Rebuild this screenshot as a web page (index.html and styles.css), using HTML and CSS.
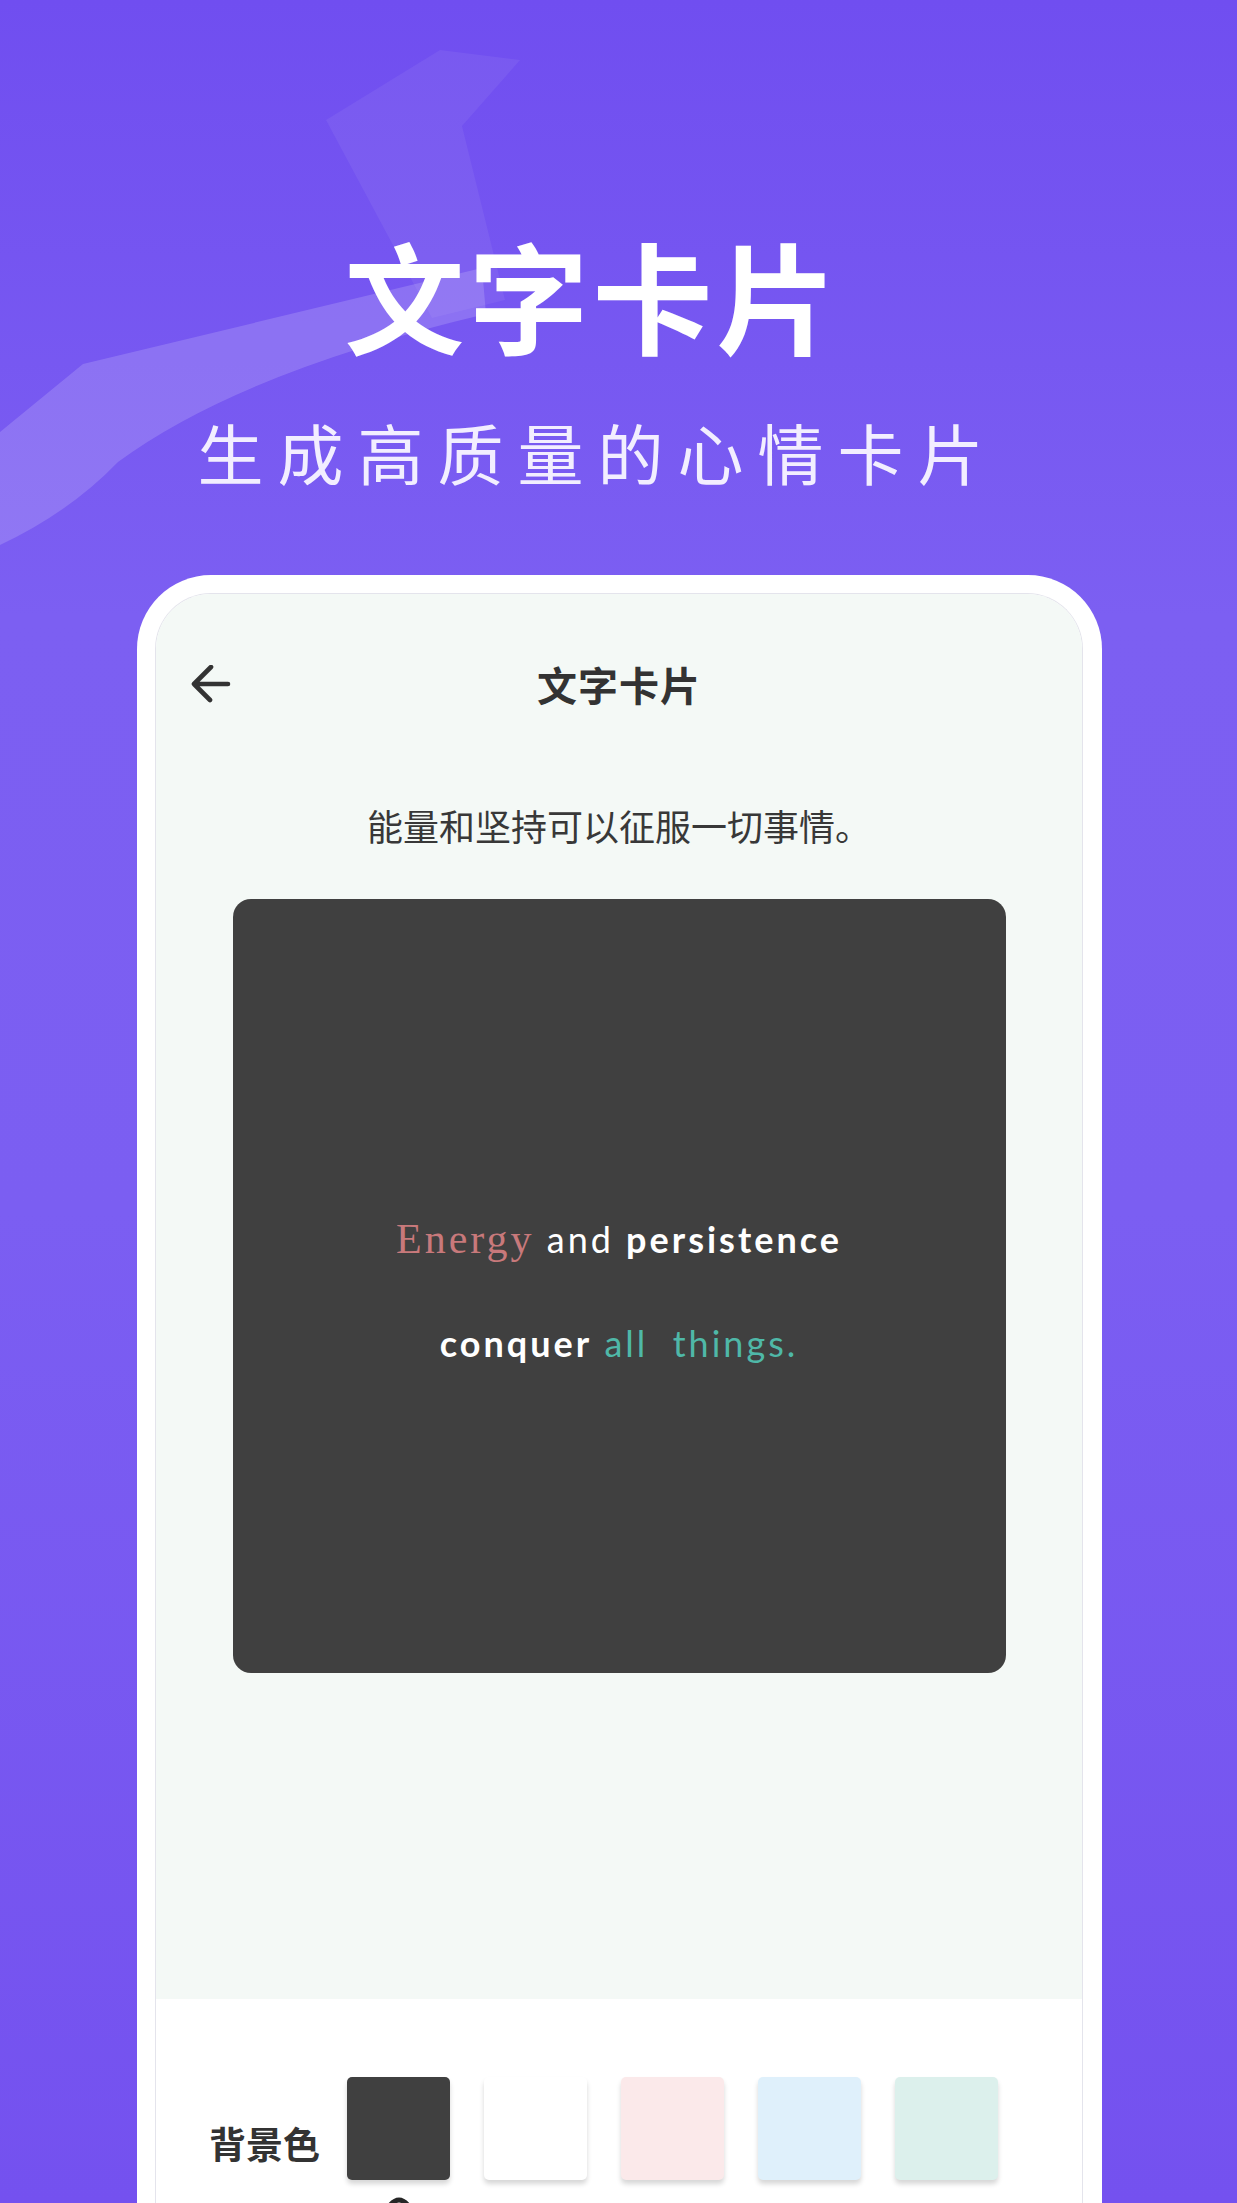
FILE: index.html
```html
<!DOCTYPE html>
<html lang="zh-CN">
<head>
<meta charset="utf-8">
<title>文字卡片</title>
<link rel="stylesheet" href="styles.css">
</head>
<body>
<svg class="deco" width="1237" height="700" viewBox="0 0 1237 700" aria-hidden="true">
  <path class="deco-a" d="M440 50 L326 120 L432 318 L505 300 L462 126 L520 60 Z"/>
  <path class="deco-b" d="M482 268 L83 364 L0 432 L0 545 Q70 512 118 462 Q240 372 486 314 Z"/>
</svg>
<header class="hero">
  <h1 class="hero-title">文字卡片</h1>
  <p class="hero-sub">生成高质量的心情卡片</p>
</header>
<div class="phone">
  <div class="screen">
    <div class="preview">
      <div class="nav">
        <svg class="back" width="40" height="38" viewBox="0 0 40 38" aria-hidden="true">
          <path d="M37 19 H3 M20 2 L3 19 L19 35"/>
        </svg>
        <div class="nav-title">文字卡片</div>
        <div></div>
      </div>
      <p class="quote">能量和坚持可以征服一切事情。</p>
      <div class="card">
        <div class="card-text">
          <div class="line"><span class="w-serif">Energy</span> <span class="w-sans">and</span> <span class="w-bold">persistence</span></div>
          <div class="line"><span class="w-bold">conquer</span> <span class="w-teal">all&nbsp; things.</span></div>
        </div>
      </div>
    </div>
    <div class="tools">
      <div class="row">
        <span class="label">背景色</span>
        <div class="swatches">
          <div class="sw-col">
            <div class="swatch sw-dark"></div>
            <svg class="pick" width="30" height="20" viewBox="0 0 30 20" aria-hidden="true">
              <path d="M4 18 Q15 2 26 18"/>
            </svg>
          </div>
          <div class="sw-col"><div class="swatch sw-white"></div></div>
          <div class="sw-col"><div class="swatch sw-pink"></div></div>
          <div class="sw-col"><div class="swatch sw-blue"></div></div>
          <div class="sw-col"><div class="swatch sw-mint"></div></div>
        </div>
      </div>
    </div>
  </div>
</div>
</body>
</html>
```
FILE: styles.css
```css
html, body {
  margin: 0;
  padding: 0;
}
body {
  width: 1237px;
  height: 2203px;
  overflow: hidden;
  position: relative;
  font-family: "Noto Sans CJK SC", "Noto Sans", sans-serif;
  background: linear-gradient(180deg, #704ef0 0%, #7c5ff2 28%, #7b5ef2 55%, #7451ef 100%);
}
.deco {
  position: absolute;
  left: 0;
  top: 0;
  z-index: 0;
}
.deco-a { fill: rgba(255,255,255,0.06); }
.deco-b { fill: rgba(255,255,255,0.16); }

.hero {
  position: relative;
  z-index: 1;
  padding: 222px 56px 0 0;
  text-align: center;
  color: #fff;
}
.hero-title {
  margin: 0;
  font-size: 120px;
  line-height: 144px;
  font-weight: 700;
  letter-spacing: 4px;
  padding-left: 4px;
}
.hero-sub {
  margin: 45px 0 0;
  font-size: 66px;
  line-height: 80px;
  font-weight: 400;
  letter-spacing: 14px;
  padding-left: 14px;
  color: #f2eeff;
}

.phone {
  position: relative;
  z-index: 1;
  margin: 84px 0 0 137px;
  width: 965px;
  height: 1700px;
  box-sizing: border-box;
  background: #fff;
  border-radius: 74px 74px 0 0;
  padding: 18px 19px 0 18px;
}
.screen {
  height: 100%;
  box-sizing: border-box;
  border: 1.5px solid #e4e4ec;
  border-bottom: none;
  border-radius: 56px 56px 0 0;
  overflow: hidden;
  background: #fff;
}
.preview {
  background: #f4f9f6;
  padding-bottom: 326px;
}
.nav {
  height: 180px;
  display: grid;
  grid-template-columns: 1fr auto 1fr;
  align-items: center;
}
.back {
  margin-left: 35px;
}
.back path {
  fill: none;
  stroke: #333;
  stroke-width: 4.6;
  stroke-linecap: round;
  stroke-linejoin: round;
}
.nav-title {
  font-size: 40px;
  line-height: 50px;
  font-weight: 700;
  color: #333;
  letter-spacing: 1px;
}
.quote {
  margin: 26px 0 0;
  text-align: center;
  font-size: 36px;
  line-height: 50px;
  color: #383838;
}
.card {
  width: 773px;
  height: 774px;
  margin: 49px auto 0;
  background: #404040;
  border-radius: 18px;
  display: flex;
  align-items: center;
  justify-content: center;
  padding-top: 10px;
  box-sizing: border-box;
}
.card-text {
  display: flex;
  flex-direction: column;
  align-items: center;
  gap: 54px;
}
.line {
  font-family: "Lato", "Noto Sans", sans-serif;
  font-size: 36px;
  line-height: 50px;
  letter-spacing: 3px;
  color: #fff;
  white-space: nowrap;
}
.w-serif {
  font-family: "Liberation Serif", serif;
  font-size: 42px;
  color: #c8797b;
}
.w-sans { font-weight: 400; }
.w-bold { font-weight: 700; }
.w-teal { font-weight: 400; color: #4fb8a8; }

.tools {
  background: #fff;
  padding: 78px 0 0 53px;
}
.row {
  display: flex;
  align-items: flex-start;
}
.label {
  align-self: flex-start;
  margin-top: 41px;
  margin-right: 27px;
  font-size: 37px;
  line-height: 50px;
  font-weight: 700;
  color: #333;
}
.swatches {
  display: flex;
  gap: 34px;
}
.sw-col {
  display: flex;
  flex-direction: column;
  align-items: center;
}
.swatch {
  width: 103px;
  height: 103px;
  border-radius: 5px;
  box-shadow: 0 4px 5px rgba(0,0,0,0.16);
}
.sw-dark { background: #404040; }
.sw-white { background: #ffffff; }
.sw-pink { background: #fbe9ea; }
.sw-blue { background: #dff0fb; }
.sw-mint { background: #dcf0ec; }
.pick {
  margin-top: 10px;
}
.pick path {
  fill: none;
  stroke: #262626;
  stroke-width: 5;
  stroke-linecap: round;
}
```
